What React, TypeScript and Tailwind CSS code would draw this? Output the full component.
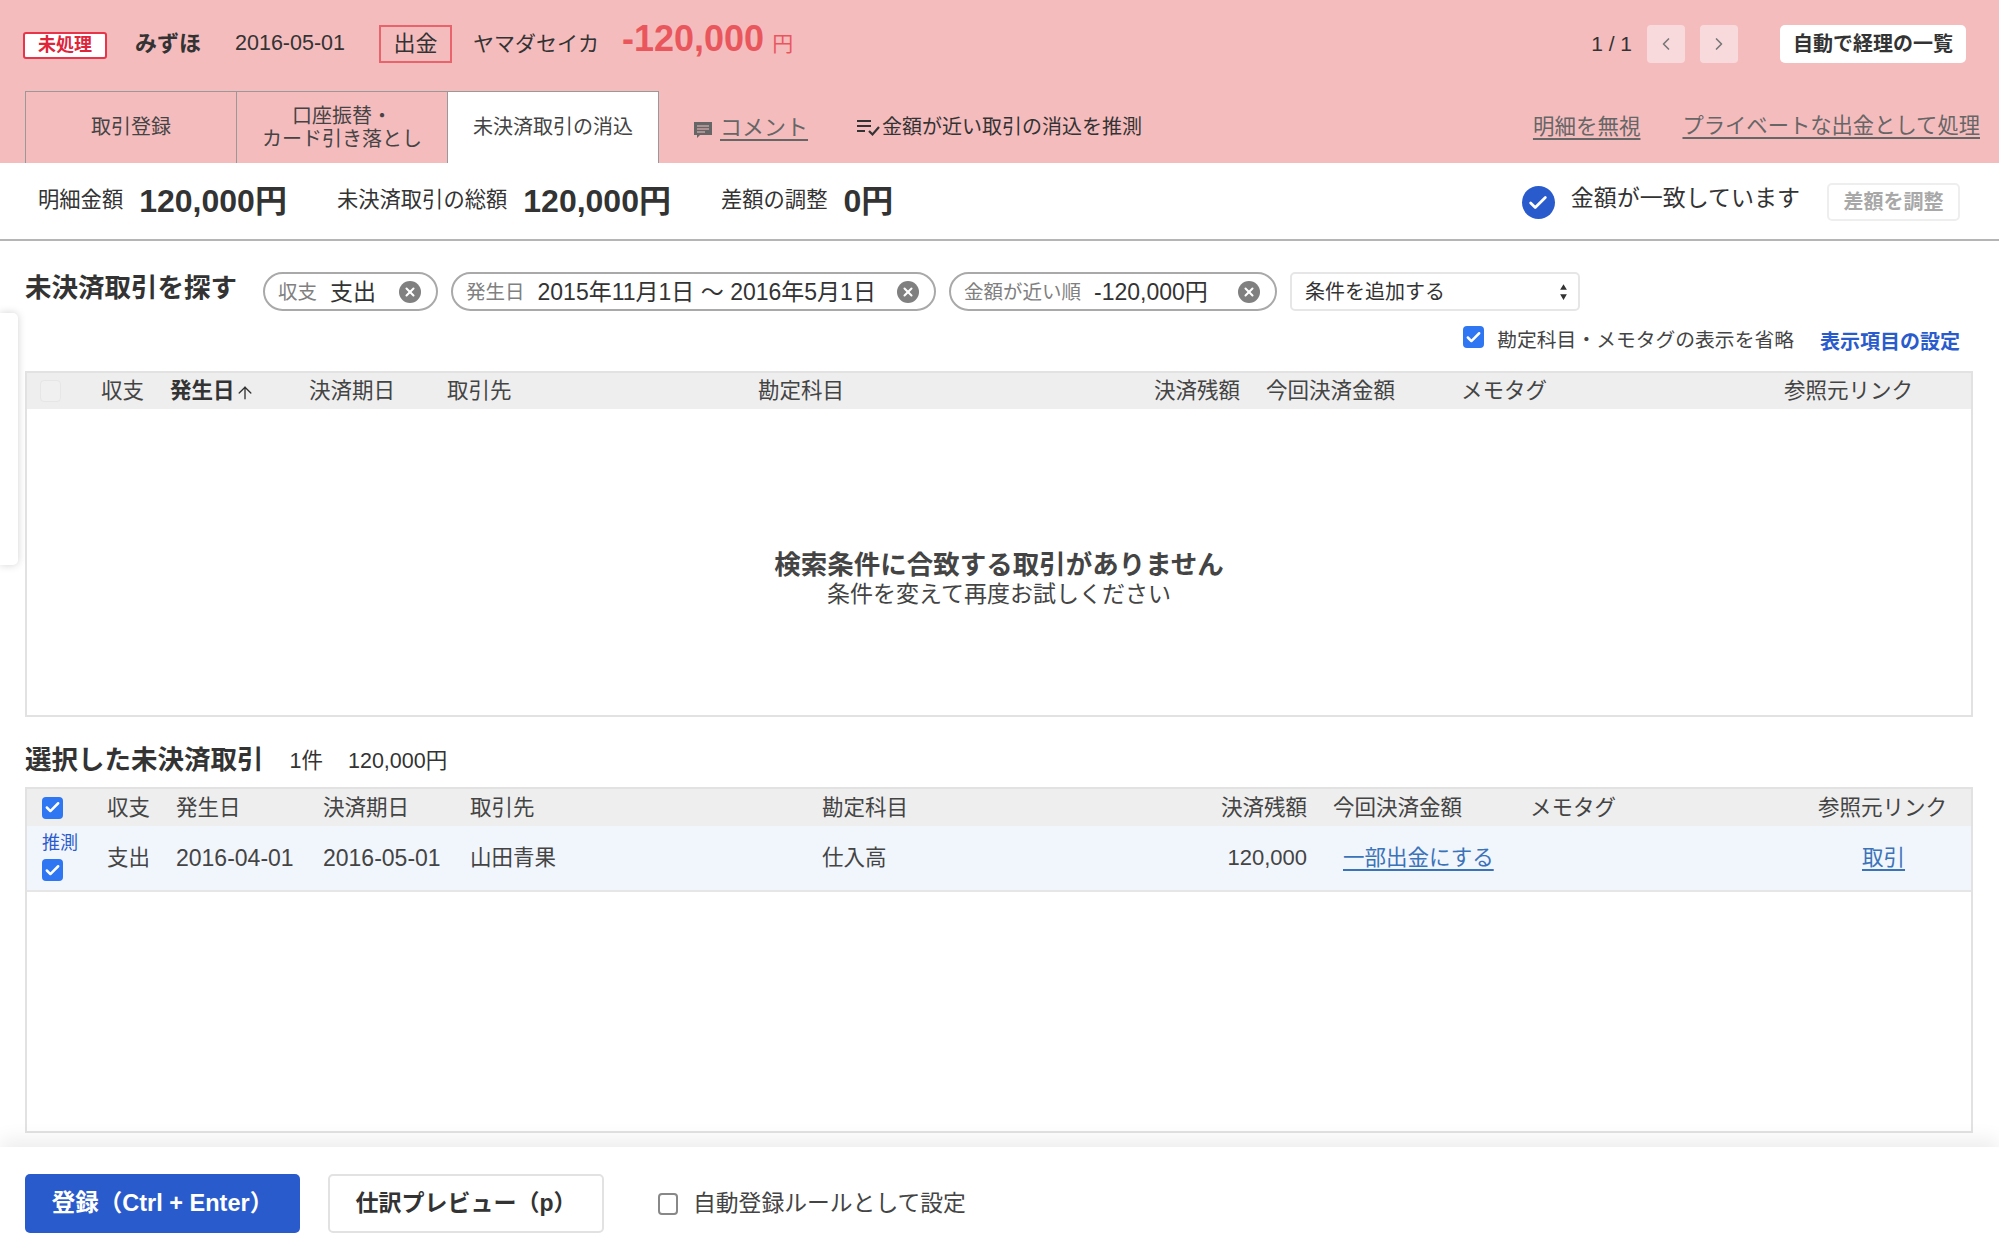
import { ArrowUp, Check, ChevronLeft, ChevronRight, X } from "lucide-react";

const th1 = "grid grid-cols-[74px_69px_139px_138px_311px_482px_26px_195px_323px_1fr] items-center";
const th2 = "grid grid-cols-[80px_69px_147px_147px_352px_485px_26px_197px_288px_1fr] items-center";

function CheckBox({ className = "" }: { readonly className?: string }) {
  return (
    <span className={`flex h-[22px] w-[21px] items-center justify-center rounded-[4px] bg-[#2f76f2] ${className}`}>
      <Check className="h-[17px] w-[17px] text-white" strokeWidth={3.5} />
    </span>
  );
}

function Pill({ label, value, width }: { readonly label: string; readonly value: string; readonly width: string }) {
  return (
    <div className={`flex h-[39px] items-center justify-between rounded-full border-2 border-[#a9a9a9] bg-white pl-[13px] pr-[15px] ${width}`}>
      <span className="flex items-center gap-[13px] whitespace-nowrap leading-[30px]">
        <span className="text-[19.5px] text-[#808080]">{label}</span>
        <span className="text-[23px] text-[#333]">{value}</span>
      </span>
      <span className="flex h-[22px] w-[22px] items-center justify-center rounded-full bg-[#808080]">
        <X className="h-[14px] w-[14px] text-white" strokeWidth={3.5} />
      </span>
    </div>
  );
}

function Tab({ children, active = false }: { readonly children: React.ReactNode; readonly active?: boolean }) {
  return (
    <div
      className={`flex h-[72px] w-[211px] items-center justify-center border-t border-r border-[#999] text-center text-[20px] leading-[23px] text-[#444] first:w-[212px] first:border-l ${
        active ? "bg-white" : ""
      }`}
    >
      {children}
    </div>
  );
}

export default function App() {
  return (
    <div className="relative flex h-[1254px] w-full flex-col overflow-hidden bg-white font-['Liberation_Sans','Noto_Sans_CJK_JP',sans-serif] text-[#333]">
      <header className="h-[163px] bg-[#f5bcbe] pl-[25px] pr-[19px]">
        <div className="flex h-[91px] items-center pb-[4px]">
          <span className="-ml-[2px] mt-[3px] flex h-[27px] w-[84px] items-center justify-center rounded-[3px] border-2 border-[#e8354a] bg-white text-[18px] font-bold text-[#e0243a]">
            未処理
          </span>
          <span className="ml-[28px] text-[22px] font-bold text-[#333]">みずほ</span>
          <span className="ml-[34px] text-[21.5px] text-[#333]">2016-05-01</span>
          <span className="ml-[34px] flex h-[38px] w-[73px] items-center justify-center border-2 border-[#e8636b] text-[22px] leading-[30px]">出金</span>
          <span className="ml-[21px] text-[21px]">ヤマダセイカ</span>
          <span className="mb-[9px] ml-[23px] text-[36px] font-bold leading-[44px] text-[#e9575d]">-120,000</span>
          <span className="ml-[8px] text-[21px] text-[#e9575d]">円</span>
          <span className="ml-auto text-[21px]">1 / 1</span>
          <span className="ml-[15px] flex h-[38px] w-[38px] items-center justify-center rounded-[4px] bg-[#f9dadc] text-[#777]">
            <ChevronLeft className="h-[20px] w-[20px]" />
          </span>
          <span className="ml-[15px] flex h-[38px] w-[38px] items-center justify-center rounded-[4px] bg-[#f9dadc] text-[#777]">
            <ChevronRight className="h-[20px] w-[20px]" />
          </span>
          <span className="ml-[42px] mr-[14px] flex h-[38px] w-[186px] items-center justify-center rounded-[5px] bg-white text-[20px] font-bold">
            自動で経理の一覧
          </span>
        </div>
        <div className="flex items-center">
          <Tab>取引登録</Tab>
          <Tab>
            口座振替・
            <br />
            カード引き落とし
          </Tab>
          <Tab active>未決済取引の消込</Tab>
          <svg viewBox="0 0 20 20" className="ml-[34px] mt-[5px] h-[20px] w-[20px]">
            <path d="M1 2h18v13H7l-3 3v-3H1z" fill="#666" />
            <path d="M4 6h12M4 9h12M4 12h8" stroke="#f5bcbe" strokeWidth="1.2" />
          </svg>
          <span className="ml-[7px] text-[22px] text-[#666] underline underline-offset-4">コメント</span>
          <svg viewBox="0 0 24 20" className="ml-[47px] h-[20px] w-[26px]" fill="none" stroke="#333" strokeWidth="2.2">
            <path d="M1 4h14M1 9h14M1 14h8" />
            <path d="M13 14l3.5 3.5L23 10" />
          </svg>
          <span className="ml-[1px] text-[20px]">金額が近い取引の消込を推測</span>
          <span className="ml-auto text-[21.5px] text-[#666] underline underline-offset-4">明細を無視</span>
          <span className="ml-[42px] text-[21.3px] text-[#666] underline underline-offset-4">プライベートな出金として処理</span>
        </div>
      </header>

      <section className="flex h-[78px] items-center border-b-2 border-[#b5b5b5] pl-[38px] pr-[39px]">
        <span className="text-[21.3px]">明細金額</span>
        <span className="ml-[16px] text-[32px] font-bold leading-[40px]">120,000円</span>
        <span className="ml-[50px] text-[21.3px]">未決済取引の総額</span>
        <span className="ml-[16px] text-[32px] font-bold leading-[40px]">120,000円</span>
        <span className="ml-[50px] text-[21.3px]">差額の調整</span>
        <span className="ml-[16px] text-[32px] font-bold leading-[40px]">0円</span>
        <span className="ml-auto mt-[3px] flex h-[33px] w-[33px] items-center justify-center rounded-full bg-[#2a5bcc]">
          <Check className="h-[22px] w-[22px] text-white" strokeWidth={3} />
        </span>
        <span className="mb-[6px] ml-[16px] text-[23px]">金額が一致しています</span>
        <span className="ml-[27px] mt-[2px] flex h-[38px] w-[133px] items-center justify-center rounded-[5px] border-2 border-[#eee] text-[20px] font-bold text-[#a8a8a8]">
          差額を調整
        </span>
      </section>

      <main className="flex-1 pl-[25px] pr-[26px]">
        <div className="flex items-center pt-[31px]">
          <h2 className="mb-[8px] w-[238px] whitespace-nowrap text-[26.5px] font-bold leading-[30px]">未決済取引を探す</h2>
          <Pill label="収支" value="支出" width="w-[175px]" />
          <div className="w-[13px]" />
          <Pill label="発生日" value="2015年11月1日 〜 2016年5月1日" width="w-[485px]" />
          <div className="w-[13px]" />
          <Pill label="金額が近い順" value="-120,000円" width="w-[328px]" />
          <div className="ml-[13px] flex h-[39px] w-[290px] items-center justify-between rounded-[5px] border-2 border-[#e6e6e6] pl-[13px] pr-[10px] text-[20px] leading-[30px]">
            条件を追加する
            <svg viewBox="0 0 8 16" className="h-[18px] w-[9px]" fill="#333">
              <path d="M4 1l3 5H1zM4 15l3-5H1z" />
            </svg>
          </div>
        </div>

        <div className="flex h-[60px] items-start justify-end pr-[13px] pt-[15px]">
          <CheckBox />
          <span className="ml-[13px] text-[19.8px] leading-[28px] text-[#444]">勘定科目・メモタグの表示を省略</span>
          <span className="ml-[26px] mt-[2px] text-[20px] font-bold leading-[28px] text-[#2a5bcc]">表示項目の設定</span>
        </div>

        <div className="flex h-[346px] flex-col border-2 border-[#e2e2e2] text-[21.5px] text-[#444]">
          <div className={`${th1} h-[36px] bg-[#eee] leading-[30px]`}>
            <span className="ml-[13px] h-[22px] w-[21px] rounded-[4px] border border-[#e6e6e6] bg-[#f0f0f0]" />
            <span>収支</span>
            <span className="flex items-center font-bold text-[#333]">
              発生日
              <ArrowUp className="mt-[3px] h-[20px] w-[20px]" strokeWidth={1.6} />
            </span>
            <span>決済期日</span>
            <span>取引先</span>
            <span className="flex justify-between">
              <span>勘定科目</span>
              <span>決済残額</span>
            </span>
            <span />
            <span>今回決済金額</span>
            <span>メモタグ</span>
            <span>参照元リンク</span>
          </div>
          <div className="flex flex-1 flex-col items-center justify-center pt-[34px]">
            <p className="text-[26.5px] font-bold leading-[30px]">検索条件に合致する取引がありません</p>
            <p className="text-[23px] leading-[28px]">条件を変えて再度お試しください</p>
          </div>
        </div>

        <div className="mb-[12px] mt-[28px] flex h-[30px] items-center">
          <h2 className="whitespace-nowrap text-[26.5px] font-bold leading-[30px]">選択した未決済取引</h2>
          <span className="ml-[26px] mt-[2px] text-[21.5px] leading-[30px]">1件</span>
          <span className="ml-[25px] mt-[2px] text-[21.5px] leading-[30px]">120,000円</span>
        </div>

        <div className="h-[346px] border-2 border-[#e2e2e2] text-[21.5px] text-[#444]">
          <div className={`${th2} h-[37px] bg-[#eee] leading-[30px]`}>
            <CheckBox className="ml-[15px]" />
            <span>収支</span>
            <span>発生日</span>
            <span>決済期日</span>
            <span>取引先</span>
            <span className="flex justify-between">
              <span>勘定科目</span>
              <span>決済残額</span>
            </span>
            <span />
            <span>今回決済金額</span>
            <span>メモタグ</span>
            <span>参照元リンク</span>
          </div>
          <div className={`${th2} h-[66px] border-b-2 border-[#e6e6e6] bg-[#f1f5fc] leading-[30px]`}>
            <div className="ml-[15px] flex flex-col pb-[4px]">
              <span className="mb-[4px] text-[18px] leading-[24px] text-[#2a5bcc]">推測</span>
              <CheckBox />
            </div>
            <span>支出</span>
            <span className="text-[23px]">2016-04-01</span>
            <span className="text-[23px]">2016-05-01</span>
            <span>山田青果</span>
            <span className="flex justify-between">
              <span>仕入高</span>
              <span className="text-[22px]">120,000</span>
            </span>
            <span />
            <span className="col-span-2 ml-[10px] text-[#3b73b9] underline underline-offset-4">一部出金にする</span>
            <span className="ml-[44px] text-[#3b73b9] underline underline-offset-4">取引</span>
          </div>
        </div>
      </main>

      <footer className="relative z-10 flex h-[107px] items-center bg-white pl-[25px] pt-[6px] shadow-[0_-8px_18px_rgba(0,0,0,0.07)]">
        <button className="h-[59px] w-[275px] rounded-[5px] bg-[#2a5bcc] text-[23.5px] font-bold text-white">
          登録（Ctrl + Enter）
        </button>
        <button className="ml-[28px] h-[59px] w-[276px] rounded-[5px] border-2 border-[#e2e2e2] bg-white text-[23px] font-bold">
          仕訳プレビュー（p）
        </button>
        <span className="ml-[54px] h-[22px] w-[20px] rounded-[4px] border-2 border-[#888] bg-white" />
        <span className="ml-[15px] text-[22.8px] text-[#444]">自動登録ルールとして設定</span>
      </footer>

      <div className="absolute left-0 top-[313px] h-[252px] w-[18px] rounded-r-[5px] bg-white shadow-[0_0_8px_rgba(0,0,0,0.18)]" />
    </div>
  );
}
